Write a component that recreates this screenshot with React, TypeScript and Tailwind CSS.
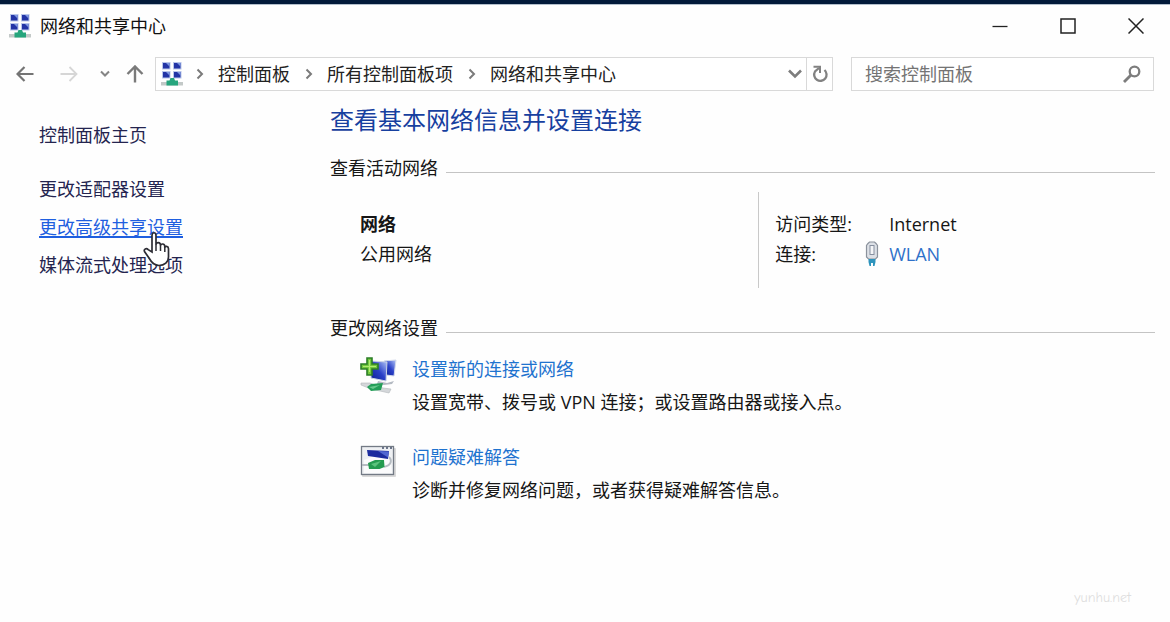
import type { ReactNode } from 'react';

function NetworkCenterIcon() {
  return (
    <svg width="24" height="26" viewBox="0 0 24 26" aria-hidden="true">
      {[
        [2, 1],
        [13, 1],
        [2, 10],
        [13, 10],
      ].map(([x, y]) => (
        <g key={`${x}-${y}`}>
          <rect x={x} y={y} width="8.5" height="7.5" fill="#b9c6ea" />
          <rect x={x + 1} y={y + 1} width="6.5" height="5.5" fill="#2334a6" />
          <path d={`M${x + 4} ${y + 1}h3.5v3.500z`} fill="#7f97e0" />
        </g>
      ))}
      <rect x="1" y="21" width="22" height="3.5" fill="#c3c9c8" />
      <path d="M10.500 17h3.500l1 2.500h3v5H6.500v-5h3z" fill="#26a57d" />
    </svg>
  );
}

function Crumb({ children }: { children: ReactNode }) {
  return (
    <li className="flex items-center">
      <svg width="8" height="12" viewBox="0 0 8 12" className="mr-[14px]" aria-hidden="true">
        <path d="M1.500 1.500L6 6l-4.500 4.500" fill="none" stroke="#7b7b7b" strokeWidth="2" />
      </svg>
      <a href="#" className="whitespace-nowrap text-[#222222]">{children}</a>
    </li>
  );
}

function SectionTitle({ children }: { children: ReactNode }) {
  return (
    <div className="flex items-center gap-2">
      <h2 className="text-[#161616]">{children}</h2>
      <div className="mt-2 h-px flex-1 bg-[#c4c4c4]" />
    </div>
  );
}

function NewConnectionIcon() {
  return (
    <svg width="37" height="37" viewBox="0 0 37 37" aria-hidden="true">
      <defs>
        <linearGradient id="screen" x1="0" y1="1" x2="1" y2="0">
          <stop offset="0" stopColor="#0d1f8f" />
          <stop offset="0.5" stopColor="#2a40c8" />
          <stop offset="1" stopColor="#b5c8f8" />
        </linearGradient>
      </defs>
      <path d="M24 4l12-1-2 16-8-1z" fill="url(#screen)" stroke="#d3daeb" />
      <path d="M11 4l16 1-1 19-15-3z" fill="url(#screen)" stroke="#ccd4e6" />
      <path d="M18 24l9 2 7-2-2 3-8 1-7-1z" fill="#b4bac2" />
      <path d="M1 26l9 0 13 5 8 1-2 4-9-2-9-2-10-4z" fill="#d4d7da" stroke="#b2b7ba" strokeWidth="0.6" />
      <path d="M7 30l4-3 12-1-2 7-10 1z" fill="#249e58" />
      <path d="M9 30l11-2-7 4z" fill="#69c98c" />
      <path d="M7 1h5v6h6v5h-6v6H7v-6H1V7h6z" fill="#71c83b" stroke="#2c7d27" strokeWidth="1.600" />
      <path d="M9.500 3v12M3 9.500h13" stroke="#b0ec73" strokeWidth="1.200" />
    </svg>
  );
}

function TroubleshootIcon() {
  return (
    <svg width="37" height="33" viewBox="0 0 37 33" aria-hidden="true">
      <rect x="2" y="3" width="34" height="29" rx="1" fill="#d9d9d9" />
      <rect x="1.500" y="1.500" width="32" height="28" fill="#eef0f3" stroke="#737a85" strokeWidth="1.300" />
      <path d="M22 3h2M26 3h2M30 3h2" stroke="#45506b" strokeWidth="1.300" />
      <path d="M4 15l10-4 16-1 2 18H4z" fill="#fbfbfc" />
      <path d="M7 5l22 1-1 8-20-3z" fill="#1b2b9e" />
      <path d="M18 6l11 0.500-1 6z" fill="#5066d0" />
      <path d="M29 12c3 3 3 8-5 10M2 20h7" fill="none" stroke="#b6bcc2" strokeWidth="1.800" />
      <path d="M8 18l7-3 9 0 0.500 7-5 2H9z" fill="#249b4f" />
      <path d="M11 19l10-3-6 6z" fill="#5bc37c" />
    </svg>
  );
}

function Task({ icon, title, text }: { icon: ReactNode; title: string; text: string }) {
  return (
    <li className="flex gap-4">
      <div className="w-9 shrink-0">{icon}</div>
      <div className="flex flex-col gap-[9px]">
        <a href="#" className="text-[#1f73cf]">{title}</a>
        <p className="text-[#161616]">{text}</p>
      </div>
    </li>
  );
}

function HandPointer() {
  return (
    <svg width="27" height="36" viewBox="0 0 27 36" className="pointer-events-none absolute top-4 left-[104px]" aria-hidden="true">
      <path
        d="M9 21V4.500C9 .8 13 .8 13 4.500V14c0-3.500 4.500-3 4.500 0v1c0-3 4.300-2.500 4.300 0.500V17c0-2.500 3.700-2 3.700 0.800V26c0 5-4 8.500-9.500 8.500-5 0-7.500-3-10-7.500L1.500 20.500c-1-2.500 1.800-3.800 3.700-1.800z"
        fill="#fff"
        stroke="#2c2c34"
        strokeWidth="1.700"
      />
      <path d="M13 14v6M17.500 15v5M21.800 16.500V21" stroke="#2c2c34" strokeWidth="1.500" />
    </svg>
  );
}

export default function App() {
  return (
    <div className="min-h-screen bg-[#fefefe] font-['Open_Sans','Noto_Sans_CJK_SC',sans-serif] text-[18px] leading-6">
      <div className="h-1 bg-[#021a3a]" />
      <header className="flex h-[42px] items-center border-t border-[#b3bfcc] pl-2">
        <NetworkCenterIcon />
        <h1 className="ml-2 flex-1 text-[#111111]">网络和共享中心</h1>
        <button type="button" aria-label="最小化" className="flex w-[68px] justify-center">
          <svg width="16" height="16" viewBox="0 0 16 16"><path d="M0.500 8.500h15" stroke="#222" strokeWidth="1.300" /></svg>
        </button>
        <button type="button" aria-label="最大化" className="flex w-[68px] justify-center">
          <svg width="16" height="16" viewBox="0 0 16 16"><rect x="1" y="1" width="14" height="14" fill="none" stroke="#222" strokeWidth="1.500" /></svg>
        </button>
        <button type="button" aria-label="关闭" className="flex w-[68px] justify-center">
          <svg width="16" height="16" viewBox="0 0 16 16"><path d="M0.500 0.500l15 15M15.500 0.500l-15 15" stroke="#222" strokeWidth="1.500" /></svg>
        </button>
      </header>

      <div className="flex items-center pt-[11px] pr-4 pl-4">
        <nav aria-label="导航" className="flex w-[139px] items-center">
          <button type="button" aria-label="后退">
            <svg width="18" height="16" viewBox="0 0 18 16"><path d="M17.500 8H1.500M8.500 1L1.500 8l7 7" fill="none" stroke="#747474" strokeWidth="2.200" /></svg>
          </button>
          <button type="button" aria-label="前进" className="ml-[26px]">
            <svg width="18" height="16" viewBox="0 0 18 16"><path d="M0.500 8h16M9.500 1l7 7-7 7" fill="none" stroke="#d6d6d6" strokeWidth="1.800" /></svg>
          </button>
          <button type="button" aria-label="最近的位置" className="ml-[22px]">
            <svg width="10" height="8" viewBox="0 0 10 8"><path d="M1 1.500l4 4 4-4" fill="none" stroke="#858585" strokeWidth="2" /></svg>
          </button>
          <button type="button" aria-label="上移" className="ml-4">
            <svg width="18" height="18" viewBox="0 0 18 18"><path d="M9 17.500V1.500M1.500 9L9 1.500 16.500 9" fill="none" stroke="#7a7a7a" strokeWidth="2.400" /></svg>
          </button>
        </nav>
        <div className="flex h-[34px] flex-1 items-center border border-[#d9d9d9] bg-white pl-1">
          <NetworkCenterIcon />
          <ol className="ml-3 flex flex-1 items-center gap-[15px]">
            <Crumb>控制面板</Crumb>
            <Crumb>所有控制面板项</Crumb>
            <Crumb>网络和共享中心</Crumb>
          </ol>
          <button type="button" aria-label="以前的位置" className="mr-1">
            <svg width="14" height="10" viewBox="0 0 14 10"><path d="M1 1.500l6 6 6-6" fill="none" stroke="#7d7d7d" strokeWidth="2.600" /></svg>
          </button>
          <button type="button" aria-label="刷新" className="flex h-full w-[26px] items-center justify-center border-l border-[#d9d9d9]">
            <svg width="16" height="18" viewBox="0 0 16 18">
              <path d="M12.500 5A6.200 6.200 0 1 1 3 6.500L7 3" fill="none" stroke="#828282" strokeWidth="2.300" />
              <path d="M1.500 1.800h6.500V8" fill="none" stroke="#828282" strokeWidth="2" />
            </svg>
          </button>
        </div>
        <label className="ml-[18px] flex h-[34px] w-[303px] items-center border border-[#d9d9d9] bg-white pr-3 pl-[13px]">
          <input type="text" aria-label="搜索控制面板" placeholder="搜索控制面板" className="min-w-0 flex-1 bg-transparent outline-none placeholder:text-[#747474]" />
          <svg width="18" height="18" viewBox="0 0 18 18" aria-hidden="true">
            <circle cx="11.500" cy="6.500" r="4.800" fill="none" stroke="#7d7d7d" strokeWidth="2.300" />
            <path d="M8 10l-7 7" stroke="#7d7d7d" strokeWidth="2.800" />
          </svg>
        </label>
      </div>

      <div className="flex pr-[15px]">
        <aside className="w-[330px] shrink-0 pt-8 pl-[39px] text-[#24244f]">
          <a href="#">控制面板主页</a>
          <ul className="mt-[30px] flex flex-col gap-[14px]">
            <li><a href="#">更改适配器设置</a></li>
            <li className="relative z-10">
              <a href="#" className="text-[#1f5fe0] underline decoration-2 underline-offset-2">更改高级共享设置</a>
              <HandPointer />
            </li>
            <li><a href="#">媒体流式处理选项</a></li>
          </ul>
        </aside>

        <main className="min-w-0 flex-1 pt-[13px]">
          <p className="text-[24px] leading-8 text-[#17409f]">查看基本网络信息并设置连接</p>
          <section className="mt-5">
            <SectionTitle>查看活动网络</SectionTitle>
            <div className="mt-3 flex h-24">
              <div className="w-[51.9%] pt-[17px] pl-[30px] leading-[30px] text-[#161616]">
                <p className="font-bold">网络</p>
                <p>公用网络</p>
              </div>
              <dl className="flex-1 border-l border-[#c9c9c9] pt-[17px] pl-4 leading-[30px] text-[#161616]">
                <div className="flex">
                  <dt className="w-[114px]">访问类型:</dt>
                  <dd>Internet</dd>
                </div>
                <div className="flex">
                  <dt className="w-[90px]">连接:</dt>
                  <dd className="flex items-center gap-[10px]">
                    <svg width="14" height="26" viewBox="0 0 14 26" aria-hidden="true">
                      <path d="M3 2.500L4.500 1h5L11 2.500l1.500 2V16l-2 2h-7l-2-2V4.500z" fill="#dce0e6" stroke="#8b929c" strokeWidth="1.200" />
                      <rect x="5" y="4.500" width="4" height="9" fill="#f5f6f8" stroke="#8790a0" />
                      <path d="M3.500 18h7v3l-1 4H8v-3H6v3H4.500l-1-4z" fill="#2e94bd" />
                    </svg>
                    <a href="#" className="text-[#2f71c9]">WLAN</a>
                  </dd>
                </div>
              </dl>
            </div>
          </section>

          <section className="mt-7">
            <SectionTitle>更改网络设置</SectionTitle>
            <ul className="mt-[17px] flex flex-col gap-[31px] pl-[30px]">
              <Task icon={<NewConnectionIcon />} title="设置新的连接或网络" text="设置宽带、拨号或 VPN 连接；或设置路由器或接入点。" />
              <Task icon={<TroubleshootIcon />} title="问题疑难解答" text="诊断并修复网络问题，或者获得疑难解答信息。" />
            </ul>
          </section>
          <p className="mt-[86px] mr-6 text-right font-['Comic_Neue','Comic_Sans_MS','Open_Sans',sans-serif] text-sm leading-5 text-[#dedede]">yunhu.net</p>
        </main>
      </div>
    </div>
  );
}
